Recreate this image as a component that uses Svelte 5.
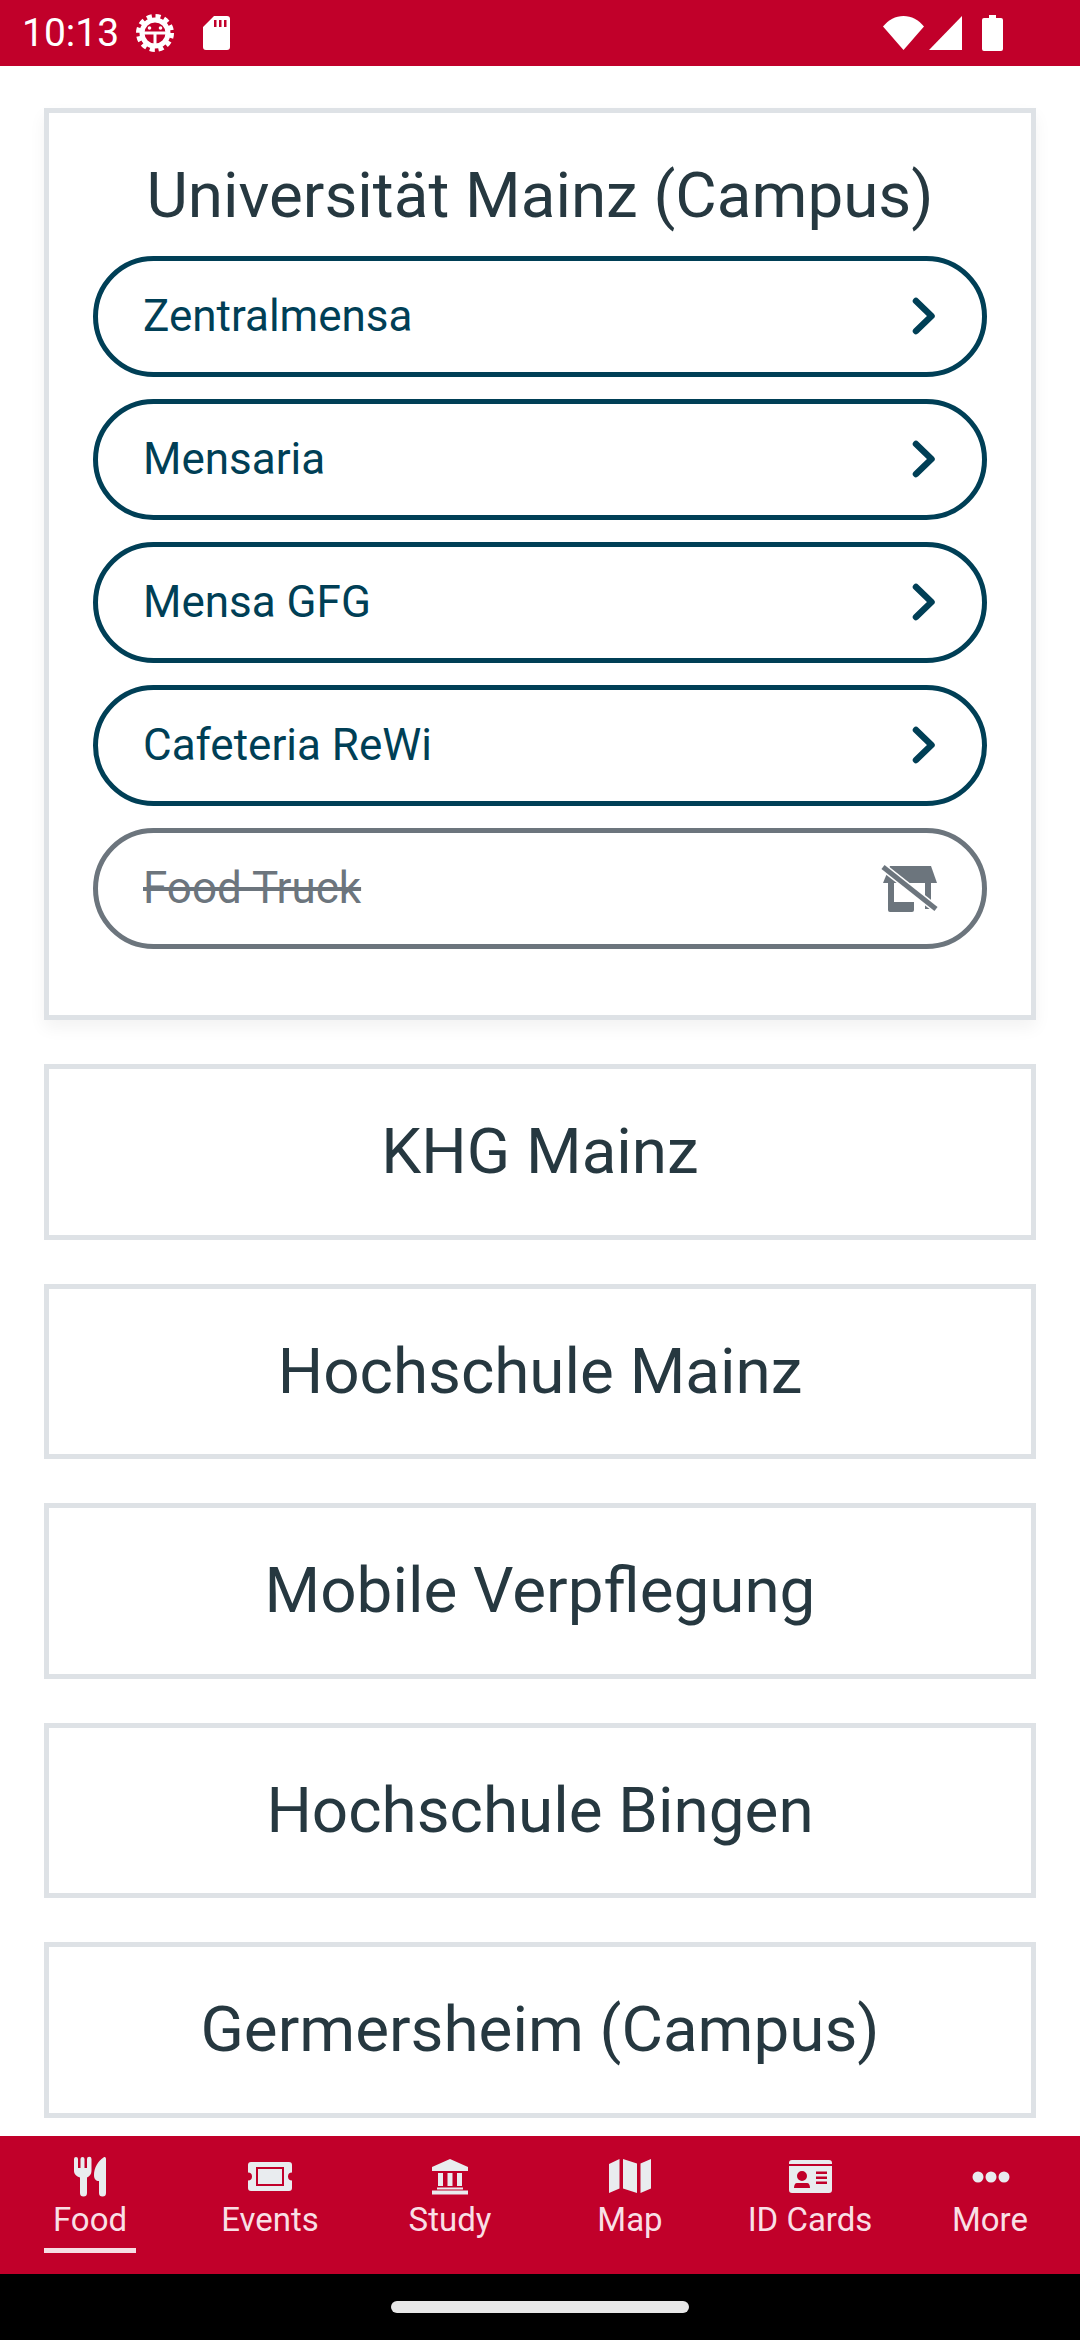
<script lang="ts">
  const mainLinks = [
    { label: 'Zentralmensa' },
    { label: 'Mensaria' },
    { label: 'Mensa GFG' },
    { label: 'Cafeteria ReWi' },
  ];
  const others = ['KHG Mainz', 'Hochschule Mainz', 'Mobile Verpflegung', 'Hochschule Bingen', 'Germersheim (Campus)'];
  const tabs = ['Food', 'Events', 'Study', 'Map', 'ID Cards', 'More'];
</script>

<div class="screen">
  <header class="statusbar">
    <span class="clock">10:13</span>
    <svg class="st-gear" width="38" height="38" viewBox="0 0 38 38" fill="none" stroke="currentColor">
      <circle cx="19" cy="19" r="16.5" stroke-width="5" stroke-dasharray="5 3.64" />
      <circle cx="19" cy="19" r="13" stroke-width="5" />
      <path d="M7 19h24M19 19v13" stroke-width="3" />
      <circle cx="13.5" cy="14" r="1.8" fill="currentColor" stroke="none" />
      <circle cx="24.5" cy="14" r="1.8" fill="currentColor" stroke="none" />
    </svg>
    <svg class="st-sd" width="27" height="34" viewBox="0 0 27 34">
      <path fill="currentColor" fill-rule="evenodd" d="M11 0h13a3 3 0 0 1 3 3v28a3 3 0 0 1-3 3H3a3 3 0 0 1-3-3V11zM11 4v7h2.500V4zM16 4v7h2.500V4zM21 4v7h2.500V4z" />
    </svg>
    <span class="st-spacer"></span>
    <svg class="st-wifi" width="41" height="34" viewBox="0 0 41 34">
      <path fill="currentColor" d="M20.500 34 0 10.500C5.500 4 12.500 0 20.500 0S35.500 4 41 10.500z" />
    </svg>
    <svg class="st-signal" width="33" height="34" viewBox="0 0 33 34">
      <path fill="currentColor" d="M33 0v34H0z" />
    </svg>
    <svg class="st-battery" width="21" height="36" viewBox="0 0 21 36">
      <path fill="currentColor" d="M7 0h7v3h5a2 2 0 0 1 2 2v29a2 2 0 0 1-2 2H2a2 2 0 0 1-2-2V5a2 2 0 0 1 2-2h5z" />
    </svg>
  </header>

  <main class="content">
    <section class="card card-open">
      <h2 class="card-title title-open">Universität Mainz (Campus)</h2>
      <div class="links">
        {#each mainLinks as link}
          <div class="link">
            <span>{link.label}</span>
            <svg class="chevron" width="24" height="38" viewBox="0 0 24 38" fill="none" stroke="currentColor" stroke-width="6.500" stroke-linecap="round" stroke-linejoin="round">
              <path d="M4 4l15.500 15L4 34" />
            </svg>
          </div>
        {/each}
        <div class="link link-closed">
          <span class="struck">Food Truck</span>
          <svg class="store" width="60" height="48" viewBox="0 0 60 48">
            <path fill="currentColor" d="M11 2h41l6 17H4z" />
            <path fill="currentColor" d="M9 19h6v19h20v8a2 2 0 0 1-2 2H11a2 2 0 0 1-2-2zM46 19h6v26h-6z" />
            <path d="M4 3l53 42" stroke="#fff" stroke-width="8" fill="none" />
            <path d="M4 3l53 42" stroke="currentColor" stroke-width="5" fill="none" />
          </svg>
        </div>
      </div>
    </section>

    {#each others as name}
      <section class="card">
        <h2 class="card-title">{name}</h2>
      </section>
    {/each}
  </main>

  <nav class="tabs">
    {#each tabs as tab, i}
      <div class="tab">
        <svg class="tab-icon" width="48" height="48" viewBox="0 0 48 48" fill="currentColor">
          {#if i === 0}
            <path d="M8 7a2 2 0 0 1 4 0v9h2.500V7a2 2 0 0 1 4 0v9H21V7a2 2 0 0 1 4.500 0v12c0 3-2 5.500-4.500 6.500V41a3.500 3.500 0 0 1-7 0V25.500C10.500 24.500 8 22 8 19z" />
            <path d="M40 7v34a3.500 3.500 0 0 1-7 0V29c-3 0-5-2-5-6 0-7 4-14 9.500-17.500C39 4.500 40 5.500 40 7z" />
          {:else if i === 1}
            <path fill-rule="evenodd" d="M5 10h38a3 3 0 0 1 3 3v7.500a4 4 0 0 0 0 8V36a3 3 0 0 1-3 3H5a3 3 0 0 1-3-3v-7.500a4 4 0 0 0 0-8V13a3 3 0 0 1 3-3zM10 15v19h28V15zM12 17h24v15H12z" />
          {:else if i === 2}
            <path d="M24 7l18 8v4H6v-4zM12 21h5v13h-5zM21.500 21h5v13h-5zM31 21h5v13h-5zM11 35.500h26V37.500H11zM6 38.500h36V42.500H6z" />
          {:else if i === 3}
            <path d="M3 12l10.500-5v29.500L3 41zM17 7l14 4.500V41l-14-4.500zM34.500 11.500 45 7v29.500L34.500 41z" />
          {:else if i === 4}
            <path fill-rule="evenodd" d="M6 8h37a3 3 0 0 1 3 3v1H3v-1a3 3 0 0 1 3-3zM3 14h43v24a3 3 0 0 1-3 3H6a3 3 0 0 1-3-3zM16 19a5 5 0 1 0 0 10 5 5 0 0 0 0-10zM11 31c-2 0-3 2-3 5h16c0-3-1-5-3-5zM30 19.500v2.500h11v-2.500zM30 24.500v2.500h11v-2.500zM30 29.500v2.500h11v-2.500z" />
          {:else}
            <circle cx="12" cy="25" r="5.500" />
            <circle cx="25" cy="25" r="5.500" />
            <circle cx="38" cy="25" r="5.500" />
          {/if}
        </svg>
        <span class="tab-label" class:tab-active={i === 0}>{tab}</span>
      </div>
    {/each}
  </nav>

  <footer class="homebar">
    <span class="pill"></span>
  </footer>
</div>

<style>
  :global(body) {
    margin: 0;
    background: #fff;
  }

  .screen {
    width: 1080px;
    height: 2340px;
    display: flex;
    flex-direction: column;
    overflow: hidden;
    font-family: Roboto, "Liberation Sans", sans-serif;
  }

  .statusbar {
    height: 66px;
    flex: none;
    display: flex;
    align-items: center;
    background: #c1002a;
    color: #fff;
    padding: 0 77px 0 22px;
    box-sizing: border-box;
  }

  .clock {
    font-size: 39px;
    width: 114px;
  }

  .st-gear {
    display: block;
  }

  .st-sd {
    margin-left: 29px;
  }

  .st-spacer {
    flex: 1;
  }

  .st-signal {
    margin-left: 5px;
  }

  .st-battery {
    margin-left: 20px;
  }

  .content {
    flex: 1;
    min-height: 0;
    overflow: hidden;
    display: flex;
    flex-direction: column;
    gap: 44px;
    padding: 42px 44px 0;
  }

  .card {
    flex: none;
    border: 5px solid #dee2e6;
    padding: 45px 44px;
    background: #fff;
  }

  .card-open {
    padding-bottom: 66px;
    box-shadow: 0 8px 16px rgba(0, 0, 0, 0.05);
  }

  .card-title {
    margin: 0;
    font-size: 63.75px;
    font-weight: 400;
    line-height: 75.5px;
    text-align: center;
    color: #263840;
  }

  .title-open {
    margin-bottom: 22.5px;
  }

  .links {
    display: flex;
    flex-direction: column;
    gap: 22px;
  }

  .link {
    height: 121px;
    box-sizing: border-box;
    display: flex;
    align-items: center;
    justify-content: space-between;
    padding: 0 46px 2px 45px;
    border: 5px solid #003f56;
    border-radius: 61px;
    color: #003f56;
    font-size: 44px;
  }

  .link-closed {
    border-color: #6c757d;
    color: #6c757d;
    padding-right: 43px;
  }

  .struck {
    text-decoration: line-through;
  }

  .tabs {
    height: 138px;
    flex: none;
    display: grid;
    grid-template-columns: repeat(6, 1fr);
    background: #c1002a;
  }

  .tab {
    display: flex;
    flex-direction: column;
    align-items: center;
    padding-top: 16px;
  }

  .tab-icon {
    display: block;
    color: #e9ecef;
  }

  .tab-label {
    font-size: 33px;
    line-height: 38px;
    margin-top: 1px;
    padding-bottom: 9px;
    width: 92px;
    white-space: nowrap;
    display: flex;
    justify-content: center;
    color: #f9dfe5;
    border-bottom: 5px solid transparent;
  }

  .tab-active {
    border-bottom-color: #f6dde3;
  }

  .homebar {
    height: 66px;
    flex: none;
    background: #000;
    display: flex;
    justify-content: center;
    padding-top: 27px;
    box-sizing: border-box;
  }

  .pill {
    width: 298px;
    height: 12px;
    border-radius: 6px;
    background: #e8e8e8;
  }
</style>
